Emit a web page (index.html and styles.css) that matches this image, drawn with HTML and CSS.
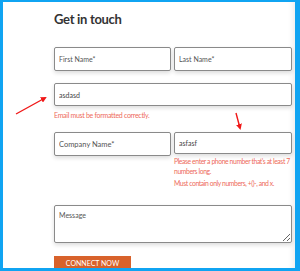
FILE: index.html
```html
<!DOCTYPE html>
<html lang="en">
<head>
  <meta charset="UTF-8">
  <meta name="viewport" content="width=device-width, initial-scale=1">
  <title>Get in touch</title>
  <link rel="stylesheet" href="styles.css">
</head>
<body>
  <div class="page">
    <h1 class="title">Get in touch</h1>

    <form class="contact-form">
      <div class="row">
        <input type="text" class="field" placeholder="First Name*">
        <input type="text" class="field" placeholder="Last Name*">
      </div>

      <input type="email" class="field email" value="asdasd">
      <p class="error">Email must be formatted correctly.</p>

      <div class="row row-company">
        <input type="text" class="field company" placeholder="Company Name*">
        <div class="phone-col">
          <input type="tel" class="field phone" value="asfasf">
          <p class="error">Please enter a phone number that's at least 7<br>numbers long.</p>
          <p class="error">Must contain only numbers, +()-, and x.</p>
        </div>
      </div>

      <textarea class="field message" placeholder="Message"></textarea>

      <button type="submit" class="connect">CONNECT NOW</button>
    </form>

    <!-- annotation arrows drawn over the screenshot -->
    <svg class="marks" width="292" height="266" viewBox="0 0 292 266">
      <defs>
        <marker id="head" markerWidth="6" markerHeight="6" refX="4" refY="3" orient="auto" markerUnits="userSpaceOnUse">
          <path d="M0,0 L6,3 L0,6 z" fill="#f01818"/>
        </marker>
      </defs>
      <line x1="13" y1="112" x2="42" y2="96" stroke="#f01818" stroke-width="1.4" marker-end="url(#head)"/>
      <line x1="233" y1="111" x2="237" y2="126" stroke="#f01818" stroke-width="1.4" marker-end="url(#head)"/>
    </svg>
  </div>
</body>
</html>
```

FILE: styles.css
```css
  body {
    margin: 0;
    padding: 2px 5px 3px 3px;
    background: #10a4f2;
    font-family: Lato, 'Open Sans', sans-serif;
  }

  .page {
    position: relative;
    height: 266px;
    overflow: hidden;
    background: white;
    padding: 9px 0 0 51px;
    box-sizing: border-box;
    box-shadow: inset -7px 0 6px -5px rgba(0, 0, 0, 0.08);
  }

  .title {
    margin: 0;
    font-size: 13px;
    line-height: 17px;
    font-weight: 700;
    letter-spacing: -0.3px;
    color: #333;
  }

  .contact-form {
    display: flex;
    flex-direction: column;
    align-items: flex-start;
    width: 238px;
    margin-top: 19px;
  }

  .row {
    display: grid;
    grid-template-columns: 117px 118px;
    gap: 3px;
    width: 100%;
    align-items: start;
  }

  .field {
    display: block;
    height: 24px;
    margin: 0;
    padding: 0 4px;
    border: 1px solid #8a8a8a;
    border-radius: 2px;
    box-shadow: 0 2px 4px rgba(0, 0, 0, 0.14);
    font-family: inherit;
    font-size: 7px;
    color: #444;
    background: white;
    box-sizing: border-box;
    outline: none;
  }

  .field::placeholder {
    color: #555;
  }

  .email {
    width: 100%;
    height: 23px;
    margin-top: 12px;
  }

  .company {
    font-size: 7.5px;
  }

  .phone {
    height: 22px;
    width: 100%;
  }

  .error {
    margin: 4px 0 0 0;
    font-size: 7px;
    line-height: 10px;
    letter-spacing: -0.3px;
    color: #ee6b5b;
  }

  .row-company {
    margin-top: 12px;
  }

  .phone-col .error {
    margin-top: 2px;
    font-size: 6.8px;
    letter-spacing: -0.4px;
    white-space: nowrap;
  }

  .message {
    width: 100%;
    height: 38px;
    margin-top: 17px;
    padding: 5px 4px;
    resize: vertical;
  }

  .connect {
    margin-top: 13px;
    width: 77px;
    height: 22px;
    padding: 0;
    border: none;
    background: #d8622b;
    color: white;
    font-family: inherit;
    font-size: 7px;
    line-height: 14px;
    display: flex;
    justify-content: center;
    align-items: flex-start;
    cursor: pointer;
  }

  .marks {
    position: absolute;
    top: 0;
    left: 0;
    pointer-events: none;
  }
```
